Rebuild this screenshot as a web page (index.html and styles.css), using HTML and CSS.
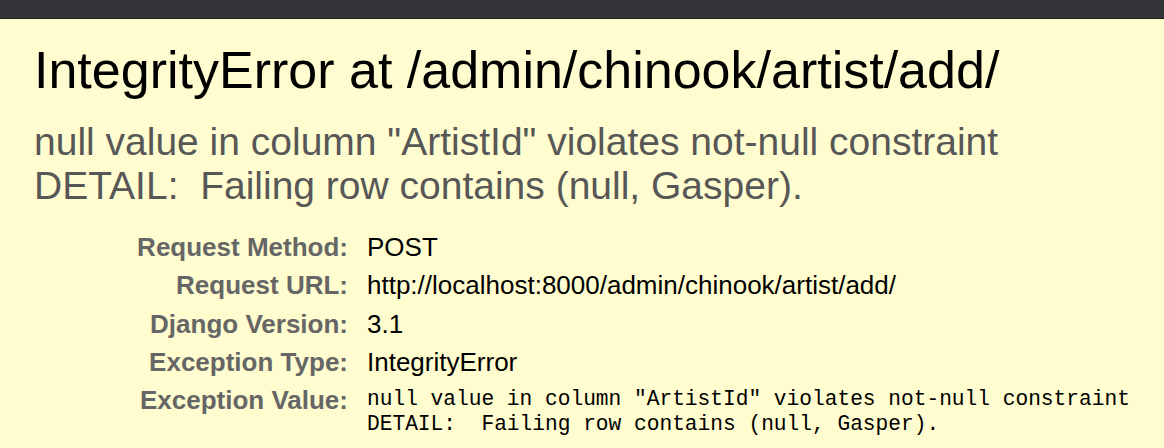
FILE: index.html
```html
<!DOCTYPE html>
<html lang="en">
<head>
<meta charset="utf-8">
<title>IntegrityError at /admin/chinook/artist/add/</title>
<link rel="stylesheet" href="styles.css">
</head>
<body>
<div class="topbar"></div>
<div class="summary">
  <h1 class="title">IntegrityError at /admin/chinook/artist/add/</h1>
  <pre class="exception-value">null value in column "ArtistId" violates not-null constraint
DETAIL:  Failing row contains (null, Gasper).</pre>
  <table class="meta">
    <tbody>
      <tr><th>Request Method:</th><td>POST</td></tr>
      <tr><th>Request URL:</th><td>http://localhost:8000/admin/chinook/artist/add/</td></tr>
      <tr><th>Django Version:</th><td>3.1</td></tr>
      <tr><th>Exception Type:</th><td>IntegrityError</td></tr>
      <tr><th>Exception Value:</th><td><pre class="mono">null value in column "ArtistId" violates not-null constraint
DETAIL:  Failing row contains (null, Gasper).</pre></td></tr>
    </tbody>
  </table>
</div>
</body>
</html>
```
FILE: styles.css
```css
html, body {
  margin: 0;
  padding: 0;
}
body {
  background: #fffdcf;
  color: #000;
  font-family: "Liberation Sans", Arial, Helvetica, sans-serif;
  font-size: 26px;
}
.topbar {
  height: 18px;
  background: #333438;
  border-bottom: 1px solid #222224;
}
.summary {
  background: #fffdcf;
  padding: 21px 20px 20px 34px;
}
.title {
  margin: 0;
  font-size: 52px;
  font-weight: normal;
  line-height: normal;
  color: #000;
}
.exception-value {
  margin: 20px 0;
  font-family: "Liberation Sans", Arial, Helvetica, sans-serif;
  font-size: 39px;
  color: #575757;
  white-space: pre-wrap;
}
.meta {
  border: none;
  border-collapse: collapse;
  width: 100%;
}
.meta th, .meta td {
  vertical-align: top;
  padding: 4px 6px;
  line-height: 30.25px;
}
.meta th {
  width: 308px;
  text-align: right;
  color: #666;
  font-weight: bold;
  padding-right: 13px;
}
.mono {
  margin: 0;
  font-family: "Liberation Mono", "Courier New", monospace;
  font-size: 21.2px;
  line-height: 25px;
  white-space: pre-wrap;
  padding-top: 2px;
}
```
